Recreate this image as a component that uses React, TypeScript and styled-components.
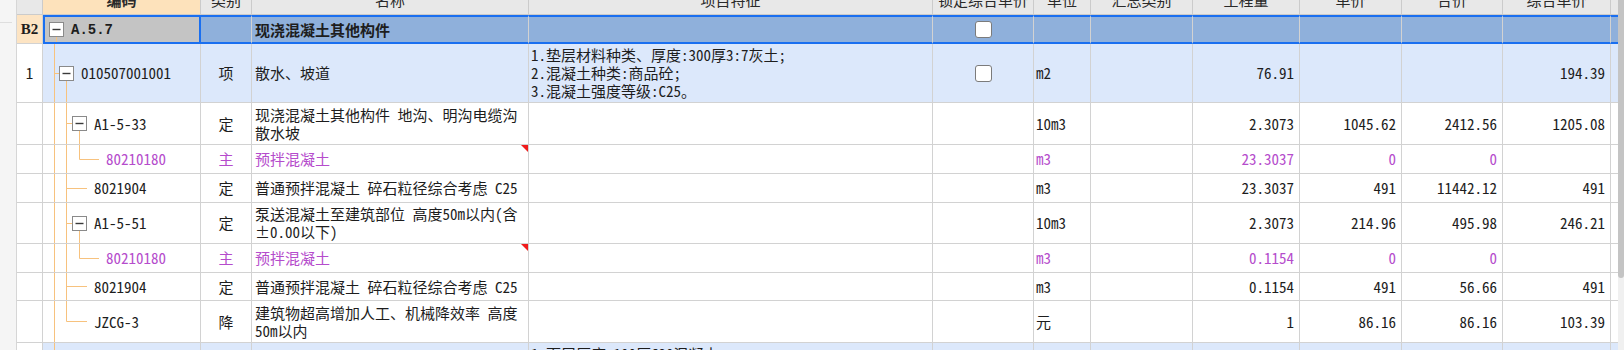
import React from 'react';
import styled, { createGlobalStyle, css } from 'styled-components';

const COLS = '26px 158px 51px 277px 404px 101px 57px 102px 107px 102px 101px 108px 7px';
const GRID_LINE = '#d2d2d2';
const SELECT = '#1a6ff0';
const PURPLE = '#b54ccc';
const TREE = '#f7c27e';
const ITEM_BG = '#dce8fb';
const GROUP_BG = '#8fb0db';

type Align = 'left' | 'center' | 'right';
type Tone = 'item' | 'plain' | 'material';

interface TreeNode {
  level: number;
  box?: boolean;
  last?: boolean;
  rails?: number[];
}

interface Line {
  no?: string;
  code: string;
  node: TreeNode;
  kind: string;
  name: string;
  feature?: string;
  lock?: boolean;
  unit?: string;
  qty?: string;
  price?: string;
  total?: string;
  comp?: string;
  h: number;
  tone: Tone;
  flag?: boolean;
}

const HEADERS = ['', '编码', '类别', '名称', '项目特征', '锁定综合单价', '单位', '汇总类别', '工程量', '单价', '合价', '综合单价', ''];

const LINES: Line[] = [
  {
    no: '1', code: '010507001001', node: { level: 1, box: true }, kind: '项', name: '散水、坡道',
    feature: '1.垫层材料种类、厚度:300厚3:7灰土;\n2.混凝土种类:商品砼;\n3.混凝土强度等级:C25。',
    lock: true, unit: 'm2', qty: '76.91', comp: '194.39', h: 59, tone: 'item',
  },
  {
    code: 'A1-5-33', node: { level: 2, box: true, rails: [0] }, kind: '定',
    name: '现浇混凝土其他构件 地沟、明沟电缆沟\n散水坡', unit: '10m3',
    qty: '2.3073', price: '1045.62', total: '2412.56', comp: '1205.08', h: 42, tone: 'plain',
  },
  {
    code: '80210180', node: { level: 3, last: true, rails: [0, 1] }, kind: '主', name: '预拌混凝土',
    unit: 'm3', qty: '23.3037', price: '0', total: '0', h: 29, tone: 'material', flag: true,
  },
  {
    code: '8021904', node: { level: 2, rails: [0] }, kind: '定', name: '普通预拌混凝土 碎石粒径综合考虑 C25',
    unit: 'm3', qty: '23.3037', price: '491', total: '11442.12', comp: '491', h: 29, tone: 'plain',
  },
  {
    code: 'A1-5-51', node: { level: 2, box: true, rails: [0] }, kind: '定',
    name: '泵送混凝土至建筑部位 高度50m以内(含\n±0.00以下)', unit: '10m3',
    qty: '2.3073', price: '214.96', total: '495.98', comp: '246.21', h: 41, tone: 'plain',
  },
  {
    code: '80210180', node: { level: 3, last: true, rails: [0, 1] }, kind: '主', name: '预拌混凝土',
    unit: 'm3', qty: '0.1154', price: '0', total: '0', h: 29, tone: 'material', flag: true,
  },
  {
    code: '8021904', node: { level: 2, rails: [0] }, kind: '定', name: '普通预拌混凝土 碎石粒径综合考虑 C25',
    unit: 'm3', qty: '0.1154', price: '491', total: '56.66', comp: '491', h: 28, tone: 'plain',
  },
  {
    code: 'JZCG-3', node: { level: 2, last: true, rails: [0] }, kind: '降',
    name: '建筑物超高增加人工、机械降效率 高度\n50m以内', unit: '元',
    qty: '1', price: '86.16', total: '86.16', comp: '103.39', h: 42, tone: 'plain',
  },
  {
    no: '2', code: '010507001002', node: { level: 1, box: true }, kind: '项', name: '台阶',
    feature: '1.面层厚度:100厚C20混凝土;\n2.混凝土种类:商品砼;\n3.混凝土强度等级:C20。',
    lock: true, unit: 'm2', h: 59, tone: 'item',
  },
];

const BOX_LEFT = [4, 16, 29, 41];
const centerOf = (k: number) => BOX_LEFT[k] + 7.5;

const GlobalStyle = createGlobalStyle`
  html, body {
    margin: 0;
    padding: 0;
    background: #fff;
    overflow: hidden;
  }
  body {
    font-family: "Noto Sans Mono CJK SC", "Noto Sans CJK SC", "DejaVu Sans Mono", sans-serif;
    font-size: 15px;
    color: #1d1d1d;
  }
`;

const Screen = styled.div`
  display: flex;
  width: 1624px;
  height: 350px;
  overflow: hidden;
`;

const SidePane = styled.div`
  flex: none;
  width: 17px;
  box-sizing: border-box;
  background: #f5f5f5;
  border-right: 1px solid #d6d6d6;
`;

const SideTab = styled.div`
  width: 12px;
  height: 22px;
  border-bottom: 1px solid #dedede;
`;

const Viewport = styled.div`
  flex: 1;
  min-width: 0;
  overflow: hidden;
`;

const Table = styled.div`
  display: flex;
  flex-direction: column;
  margin-top: -15px;
`;

const Track = styled.div`
  flex: none;
  width: 6px;
  background: #f0f0f0;
`;

const Thumb = styled.div`
  height: 278px;
  background: #c4c4c4;
  border-radius: 0 0 3px 3px;
`;

const HeaderRow = styled.div`
  display: grid;
  grid-template-columns: ${COLS};
  height: 30px;
`;

const HeadCell = styled.div<{ $active?: boolean; $last?: boolean }>`
  display: flex;
  align-items: center;
  justify-content: center;
  box-sizing: border-box;
  background: ${(p) => (p.$active ? '#fde2bb' : '#e8e8e8')};
  border-right: ${(p) => (p.$last ? 'none' : '1px solid #cbcbcb')};
  border-bottom: 1px solid #cbcbcb;
  font-family: "Noto Sans CJK SC", sans-serif;
  font-weight: ${(p) => (p.$active ? 700 : 400)};
  color: #2a2a2a;
  white-space: nowrap;
  overflow: hidden;
`;

const Row = styled.div<{ $h: number; $bg: string; $tone?: Tone }>`
  display: grid;
  grid-template-columns: ${COLS};
  height: ${(p) => p.$h}px;
  background: ${(p) => p.$bg};
  color: ${(p) => (p.$tone === 'material' ? PURPLE : 'inherit')};
`;

const Cell = styled.div<{ $align?: Align; $sel?: boolean; $open?: boolean; $pad?: number }>`
  position: relative;
  display: flex;
  align-items: center;
  justify-content: ${(p) =>
    p.$align === 'right' ? 'flex-end' : p.$align === 'center' ? 'center' : 'flex-start'};
  padding: ${(p) =>
    p.$align === 'right' ? '0 5px 0 0' : p.$align === 'center' ? '0' : `0 0 0 ${p.$pad ?? 3}px`};
  box-sizing: border-box;
  min-width: 0;
  overflow: hidden;
  border-right: ${(p) => (p.$open ? 'none' : `1px solid ${GRID_LINE}`)};
  border-bottom: 1px solid ${GRID_LINE};
  white-space: pre-line;
  line-height: 18px;
  ${(p) =>
    p.$sel &&
    css`
      border-top: 2px solid ${SELECT};
      border-bottom: 2px solid ${SELECT};
    `}
`;

const NoCell = styled(Cell)<{ $bg: string }>`
  background: ${(p) => p.$bg};
  color: #1d1d1d;
`;

const CodeCell = styled(Cell)<{ $focus?: boolean }>`
  padding: 0;
  align-items: stretch;
  ${(p) =>
    p.$focus &&
    css`
      background: #c4c4c4;
      border: 2px solid ${SELECT};
    `}
`;

const CodeInner = styled.div`
  display: flex;
  align-items: center;
`;

const NameCell = styled(Cell)<{ $flag?: boolean }>`
  ${(p) =>
    p.$flag &&
    css`
      &::after {
        content: '';
        position: absolute;
        top: 0;
        right: 0;
        border-top: 7px solid #f01c1c;
        border-left: 7px solid transparent;
      }
    `}
`;

const Guide = styled.svg`
  display: block;
  flex: none;
`;

const GroupNo = styled.span`
  font-family: "Liberation Serif", serif;
  font-weight: 700;
  font-size: 15px;
`;

const GroupCode = styled.span`
  font-family: "Liberation Mono", monospace;
  font-weight: 700;
  font-size: 14px;
`;

const GroupName = styled.span`
  font-family: "Noto Sans CJK SC", sans-serif;
  font-weight: 700;
`;

const Check = styled.span`
  display: block;
  width: 17px;
  height: 17px;
  box-sizing: border-box;
  border: 1px solid #7b7b7b;
  border-radius: 3px;
  background: #fff;
`;

const TreeGuide = ({ node, h, open = true }: { node: TreeNode; h: number; open?: boolean }) => {
  const { level, box, last, rails = [] } = node;
  const width = BOX_LEFT[level] + 22;
  const mid = Math.floor(h / 2) + 0.5;
  const bl = BOX_LEFT[level];

  return (
    <Guide width={width} height={h} viewBox={`0 0 ${width} ${h}`}>
      <g stroke={TREE} strokeWidth={1} fill="none">
        {rails.map((k) => (
          <line key={k} x1={centerOf(k)} y1={0} x2={centerOf(k)} y2={h} />
        ))}
        {level > 0 && (
          <>
            <line x1={centerOf(level - 1)} y1={0} x2={centerOf(level - 1)} y2={last ? mid : h} />
            <line x1={centerOf(level - 1)} y1={mid} x2={box ? bl : bl + 15} y2={mid} />
          </>
        )}
        {box && open && <line x1={centerOf(level)} y1={mid + 7} x2={centerOf(level)} y2={h} />}
      </g>
      {box && (
        <>
          <rect x={bl + 0.5} y={mid - 7} width={14} height={14} fill="#fff" stroke="#8a8a8a" />
          <line x1={bl + 3.5} y1={mid} x2={bl + 11.5} y2={mid} stroke="#3a3a3a" strokeWidth={1.4} />
        </>
      )}
    </Guide>
  );
};

const GroupRow = () => (
  <Row $h={29} $bg={GROUP_BG}>
    <NoCell $align="center" $bg="#fde4c3">
      <GroupNo>B2</GroupNo>
    </NoCell>
    <CodeCell $focus>
      <CodeInner>
        <TreeGuide node={{ level: 0, box: true }} h={25} />
        <GroupCode>A.5.7</GroupCode>
      </CodeInner>
    </CodeCell>
    <Cell $sel />
    <Cell $sel>
      <GroupName>现浇混凝土其他构件</GroupName>
    </Cell>
    <Cell $sel />
    <Cell $sel $align="center">
      <Check />
    </Cell>
    <Cell $sel />
    <Cell $sel />
    <Cell $sel />
    <Cell $sel />
    <Cell $sel />
    <Cell $sel />
    <Cell $sel $open />
  </Row>
);

const DataRow = ({ line }: { line: Line }) => {
  const bg = line.tone === 'item' ? ITEM_BG : '#fff';
  return (
    <Row $h={line.h} $bg={bg} $tone={line.tone}>
      <NoCell $align="center" $bg="#fff">
        {line.no}
      </NoCell>
      <CodeCell>
        <CodeInner>
          <TreeGuide node={line.node} h={line.h - 1} />
          <span>{line.code}</span>
        </CodeInner>
      </CodeCell>
      <Cell $align="center">{line.kind}</Cell>
      <NameCell $flag={line.flag}>{line.name}</NameCell>
      <Cell $pad={2}>{line.feature}</Cell>
      <Cell $align="center">{line.lock && <Check />}</Cell>
      <Cell $pad={2}>{line.unit}</Cell>
      <Cell />
      <Cell $align="right">{line.qty}</Cell>
      <Cell $align="right">{line.price}</Cell>
      <Cell $align="right">{line.total}</Cell>
      <Cell $align="right">{line.comp}</Cell>
      <Cell $open />
    </Row>
  );
};

const App = () => (
  <>
    <GlobalStyle />
    <Screen>
      <SidePane>
        <SideTab />
      </SidePane>
      <Viewport>
        <Table>
          <HeaderRow>
            {HEADERS.map((label, i) => (
              <HeadCell key={i} $active={i === 1} $last={i === HEADERS.length - 1}>
                {label}
              </HeadCell>
            ))}
          </HeaderRow>
          <GroupRow />
          {LINES.map((line, i) => (
            <DataRow key={i} line={line} />
          ))}
        </Table>
      </Viewport>
      <Track>
        <Thumb />
      </Track>
    </Screen>
  </>
);

export default App;
